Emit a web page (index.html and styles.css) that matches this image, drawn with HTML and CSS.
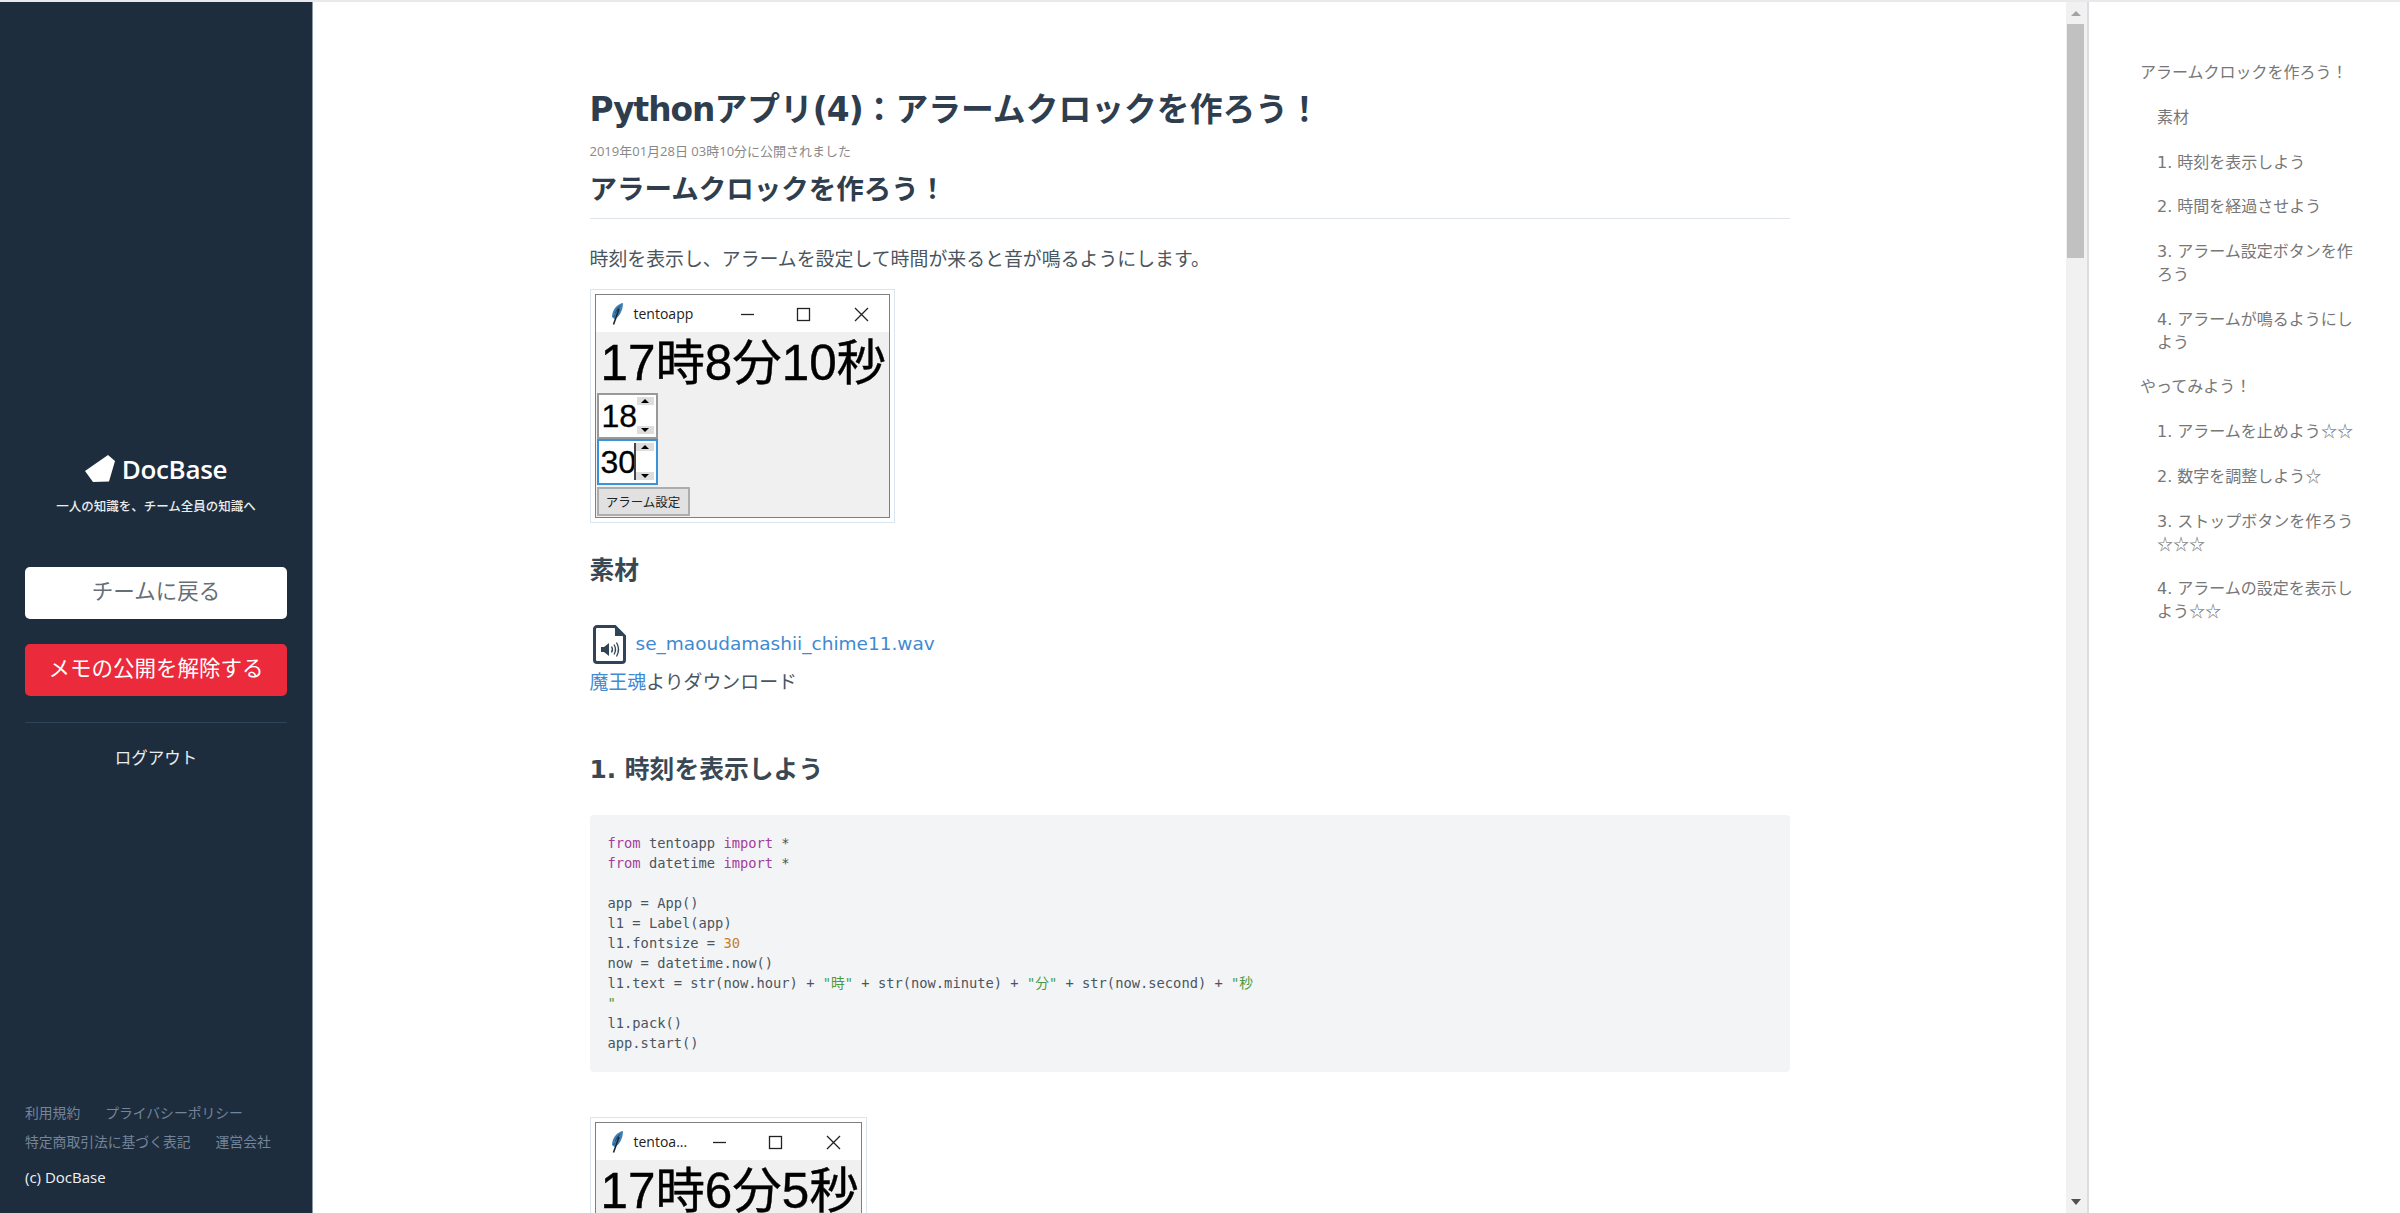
FILE: index.html
```html
<!DOCTYPE html>
<html lang="ja">
<head>
<meta charset="utf-8">
<title>Pythonアプリ(4)</title>
<link rel="stylesheet" href="styles.css">
</head>
<body>
<div class="page">
  <aside class="side">
    <div class="brand">
      <svg class="brand-mark" viewBox="0 0 30 28"><path d="M0 16 L23 0 L30 6 L24 26.500 L8 27 Z" fill="#fff"/></svg>
      <span class="brand-name">DocBase</span>
    </div>
    <p class="tagline">一人の知識を、チーム全員の知識へ</p>
    <a class="btn btn-white">チームに戻る</a>
    <a class="btn btn-red">メモの公開を解除する</a>
    <div class="side-rule"></div>
    <a class="logout">ログアウト</a>
    <footer class="side-foot">
      <div class="foot-row"><a>利用規約</a><a>プライバシーポリシー</a></div>
      <div class="foot-row"><a>特定商取引法に基づく表記</a><a>運営会社</a></div>
      <div class="copy">(c) DocBase</div>
    </footer>
  </aside>

  <main class="main">
    <article class="doc">
      <h1 class="title"><span class="lat">Python</span>アプリ<span class="lat">(4)</span>：アラームクロックを作ろう！</h1>
      <div class="date">2019年01月28日 03時10分に公開されました</div>
      <h2 class="h2">アラームクロックを作ろう！</h2>
      <p class="lead">時刻を表示し、アラームを設定して時間が来ると音が鳴るようにします。</p>

      <div class="shot shot-a">
        <div class="tk">
          <div class="tk-bar">
            <svg class="feather" viewBox="0 0 14 24"><path d="M13 1 C7 2 2 8 2 15 L4.500 17 C9.500 15 13 8 13 1 Z" fill="#3f7fb5"/><path d="M11 3.500 C7 6 4.500 9 5 14 L3 15 Z" fill="#25506f"/><path d="M9 7 L3.500 22.500" stroke="#1d2730" stroke-width="1.600" fill="none"/></svg>
            <span class="tk-title">tentoapp</span>
            <svg class="tk-ctrl" viewBox="0 0 150 20"><path d="M0 10.500 H13" stroke="#222" stroke-width="1.300"/><rect x="56.500" y="4.500" width="12" height="12" fill="none" stroke="#222" stroke-width="1.300"/><path d="M114 4 L127 17 M127 4 L114 17" stroke="#222" stroke-width="1.300" fill="none"/></svg>
          </div>
          <div class="tk-body">
            <div class="tk-big">17時8分10秒</div>
            <div class="spin">18<span class="spin-arrows"><i class="up"></i><i class="down"></i></span></div>
            <div class="spin spin-on">30<span class="spin-arrows spin-caret"><i class="up"></i><i class="down"></i></span></div>
            <div class="tk-btn">アラーム設定</div>
          </div>
        </div>
      </div>

      <h3 class="h3 h3-a">素材</h3>
      <div class="file">
        <svg class="file-icon" viewBox="0 0 33 39">
          <path d="M4 1.500 H22 L31.500 11 V35 a2.500 2.500 0 0 1 -2.500 2.500 H4 a2.500 2.500 0 0 1 -2.500 -2.500 V4 a2.500 2.500 0 0 1 2.500 -2.500 Z" fill="#fff" stroke="#2f4459" stroke-width="3"/>
          <path d="M22 1.500 V11 H31.500 Z" fill="#2f4459"/>
          <path d="M8 22 H11 L16 18 V31 L11 27 H8 Z" fill="#2f4459"/>
          <path d="M18.500 21.500 Q20.500 24.500 18.500 27.500 M21 19.500 Q24 24.500 21 29.500 M23.500 17.500 Q27.500 24.500 23.500 31.500" fill="none" stroke="#2f4459" stroke-width="1.300"/>
        </svg>
        <a class="link file-name">se_maoudamashii_chime11.wav</a>
      </div>
      <p class="source"><a class="link">魔王魂</a>よりダウンロード</p>

      <h3 class="h3 h3-b">1. 時刻を表示しよう</h3>
      <div class="code">
        <div class="ln"><span class="kw">from</span> tentoapp <span class="kw">import</span> *</div>
        <div class="ln"><span class="kw">from</span> datetime <span class="kw">import</span> *</div>
        <div class="ln"></div>
        <div class="ln">app = App()</div>
        <div class="ln">l1 = Label(app)</div>
        <div class="ln">l1.fontsize = <span class="num">30</span></div>
        <div class="ln">now = datetime.now()</div>
        <div class="ln">l1.text = str(now.hour) + <span class="str">"時"</span> + str(now.minute) + <span class="str">"分"</span> + str(now.second) + <span class="str">"秒</span></div>
        <div class="ln"><span class="str">"</span></div>
        <div class="ln">l1.pack()</div>
        <div class="ln">app.start()</div>
      </div>

      <div class="shot shot-b">
        <div class="tk">
          <div class="tk-bar">
            <svg class="feather" viewBox="0 0 14 24"><path d="M13 1 C7 2 2 8 2 15 L4.500 17 C9.500 15 13 8 13 1 Z" fill="#3f7fb5"/><path d="M11 3.500 C7 6 4.500 9 5 14 L3 15 Z" fill="#25506f"/><path d="M9 7 L3.500 22.500" stroke="#1d2730" stroke-width="1.600" fill="none"/></svg>
            <span class="tk-title tk-title-b">tentoa...</span>
            <svg class="tk-ctrl" viewBox="0 0 150 20"><path d="M0 10.500 H13" stroke="#222" stroke-width="1.300"/><rect x="56.500" y="4.500" width="12" height="12" fill="none" stroke="#222" stroke-width="1.300"/><path d="M114 4 L127 17 M127 4 L114 17" stroke="#222" stroke-width="1.300" fill="none"/></svg>
          </div>
          <div class="tk-body">
            <div class="tk-big">17時6分5秒</div>
          </div>
        </div>
      </div>
    </article>
  </main>

  <div class="scrollbar">
    <span class="arrow arrow-up"></span>
    <span class="thumb"></span>
    <span class="arrow arrow-down"></span>
  </div>

  <nav class="toc">
    <a class="toc-h">アラームクロックを作ろう！</a>
    <a class="toc-s">素材</a>
    <a class="toc-s">1. 時刻を表示しよう</a>
    <a class="toc-s">2. 時間を経過させよう</a>
    <a class="toc-s">3. アラーム設定ボタンを作ろう</a>
    <a class="toc-s">4. アラームが鳴るようにしよう</a>
    <a class="toc-h">やってみよう！</a>
    <a class="toc-s">1. アラームを止めよう<span class="star">☆☆</span></a>
    <a class="toc-s">2. 数字を調整しよう<span class="star">☆</span></a>
    <a class="toc-s">3. ストップボタンを作ろう<span class="star">☆☆☆</span></a>
    <a class="toc-s">4. アラームの設定を表示しよう<span class="star">☆☆</span></a>
  </nav>
</div>
</body>
</html>
```

FILE: styles.css
```css
* { box-sizing: border-box; }
html, body { margin: 0; height: 100%; overflow: hidden; }
body {
  font-family: "Open Sans", "Noto Sans CJK JP", sans-serif;
  color: #4a5560;
  background: #fff;
}
a { text-decoration: none; }
p, h1, h2, h3 { margin: 0; }

.page { display: flex; height: 1213px; border-top: 2px solid #e7e9ec; overflow: hidden; }

/* sidebar */
.side {
  width: 313px;
  flex: none;
  display: flex;
  flex-direction: column;
  background: #1e2d3d;
  border-right: 1px solid #8b97a3;
  padding: 450px 25px 26px;
}
.brand { display: flex; align-items: center; justify-content: center; height: 34px; gap: 7px; }
.brand-mark { width: 30px; height: 28px; }
.brand-name { color: #fff; font-size: 26px; font-weight: 600; letter-spacing: -0.3px; line-height: 34px; }
.tagline { margin-top: 12px; color: #e8edf1; font-size: 12.500px; line-height: 18px; text-align: center; font-weight: 500; }
.btn { display: block; height: 52px; line-height: 48px; text-align: center; border-radius: 5px; font-size: 21.500px; }
.btn-white { margin-top: 51px; background: #fff; color: #666f78; }
.btn-red { margin-top: 25px; background: #eb2a3c; color: #fff; }
.side-rule { margin-top: 26px; height: 1px; background: #2e4358; }
.logout { margin-top: 23px; color: #e8edf1; text-align: center; font-size: 16.500px; line-height: 24px; }
.side-foot { margin-top: auto; }
.foot-row { display: flex; gap: 25px; height: 20px; line-height: 20px; margin-bottom: 9px; font-size: 13.800px; color: #74849a; }
.copy { margin-top: 15px; line-height: 20px; font-size: 15px; color: #eef2f5; }

/* main */
.main { flex: 1; min-width: 0; overflow: hidden; }
.doc { width: 1200px; margin: 0 auto; padding-top: 86px; }
.title { font-family: "DejaVu Sans", "Noto Sans CJK JP", sans-serif; font-size: 32.800px; line-height: 44px; font-weight: 700; color: #2f3e4e; }
.lat { letter-spacing: -1px; }
.date { margin-top: 9px; font-size: 13px; line-height: 20px; color: #888; }
.h2 { margin-top: 8px; font-size: 27.500px; line-height: 40px; padding-bottom: 9px; border-bottom: 1px solid #dfe4ea; font-weight: 700; color: #2f3e4e; }
.lead { margin-top: 26px; font-size: 18.900px; line-height: 28px; }

/* screenshot frames */
.shot { margin-top: 16px; padding: 4px; border: 1px solid #dbe5ef; background: #fff; }
.shot-a { width: 305px; height: 234px; }
.shot-b { width: 277px; margin-top: 45px; }
.tk { border: 1px solid #7f7f7f; height: 100%; background: #f0f0f0; overflow: hidden; }
.tk-bar { display: flex; align-items: center; height: 37px; background: #fff; padding-left: 14px; }
.feather { width: 14px; height: 24px; flex: none; }
.tk-title { margin-left: 10px; width: 104px; flex: none; font-size: 14px; color: #222; white-space: nowrap; }
.tk-title-b { width: 76px; }
.tk-ctrl { width: 150px; height: 20px; flex: none; margin-left: 3px; }
.tk-body { padding: 0 1px; }
.tk-big { height: 61px; padding-left: 4px; font-family: "Liberation Sans", "Noto Sans CJK JP", sans-serif; font-size: 49.400px; line-height: 61px; color: #000; white-space: nowrap; -webkit-text-stroke: 0.4px #000; }
.spin {
  display: flex;
  justify-content: space-between;
  width: 61px;
  height: 46px;
  padding: 2px 2px 3px 3px;
  border: 2px solid #999;
  background: #fff;
  font-family: "Liberation Sans", sans-serif;
  font-size: 32px;
  line-height: 38px;
  color: #000;
  -webkit-text-stroke: 0.3px #000;
}
.spin-on { border-color: #3a92d8; padding-left: 2px; }
.spin-arrows { display: flex; flex-direction: column; justify-content: space-between; width: 18px; }
.spin-caret { box-shadow: -2px 0 0 0 #444; }
.spin-arrows i { display: flex; align-items: center; justify-content: center; height: 8px; background: #ddd; }
.up::after { content: ""; border: 4px solid transparent; border-top: 0; border-bottom: 4px solid #000; }
.down::after { content: ""; border: 4px solid transparent; border-bottom: 0; border-top: 4px solid #000; }
.tk-btn { margin-top: 2px; width: 93px; height: 29px; border: 2px solid #adadad; background: #e1e1e1; text-align: center; font-family: "Noto Sans CJK JP", sans-serif; font-size: 12.500px; line-height: 25px; color: #222; }

/* headings */
.h3 { font-family: "DejaVu Sans", "Noto Sans CJK JP", sans-serif; font-size: 24.800px; line-height: 34px; font-weight: 700; color: #3a4754; }
.h3-a { margin-top: 31px; }
.h3-b { margin-top: 57px; }
.link { color: #3f8ad0; }
.file { margin-top: 37px; display: flex; align-items: center; height: 39px; padding-left: 3px; gap: 10px; }
.file-icon { width: 33px; height: 39px; flex: none; }
.file-name { font-family: "DejaVu Sans", sans-serif; font-size: 18.500px; line-height: 36px; padding-bottom: 2px; }
.source { margin-top: 4px; font-size: 18.900px; line-height: 28px; }

/* code */
.code {
  margin: 28px 0 0;
  height: 257px;
  padding: 18px 18px;
  background: #f3f4f6;
  border-radius: 4px;
  font-family: "DejaVu Sans Mono", "Noto Sans CJK JP", monospace;
  font-size: 13.750px;
  line-height: 20px;
  color: #4a5560;
}
.ln { height: 20px; white-space: pre; }
.kw { color: #a33c9c; }
.num { color: #c5801f; }
.str { color: #4c9a3f; }

/* scrollbar */
.scrollbar {
  width: 23px;
  flex: none;
  display: flex;
  flex-direction: column;
  align-items: center;
  background: #f1f1f1;
  border-right: 2px solid #dcdde0;
  padding-right: 2px;
}
.arrow { flex: none; width: 0; border-left: 5px solid transparent; border-right: 5px solid transparent; }
.arrow-up { margin-top: 9px; border-bottom: 5px solid #a3a3a3; }
.thumb { flex: none; margin-top: 8px; width: 17px; height: 234px; background: #c1c1c1; }
.arrow-down { margin-top: auto; margin-bottom: 8px; border-top: 6px solid #505050; }

/* toc */
.toc { width: 311px; flex: none; padding: 60px 36px 0 51px; display: flex; flex-direction: column; gap: 22px; font-family: "DejaVu Sans", "Noto Sans CJK JP", sans-serif; font-size: 16px; line-height: 22.800px; color: #777; }
.toc-h, .toc-s { display: block; }
.toc-s { padding-left: 17px; }
.star { font-family: "Noto Sans CJK JP", sans-serif; line-height: 0; }
```
